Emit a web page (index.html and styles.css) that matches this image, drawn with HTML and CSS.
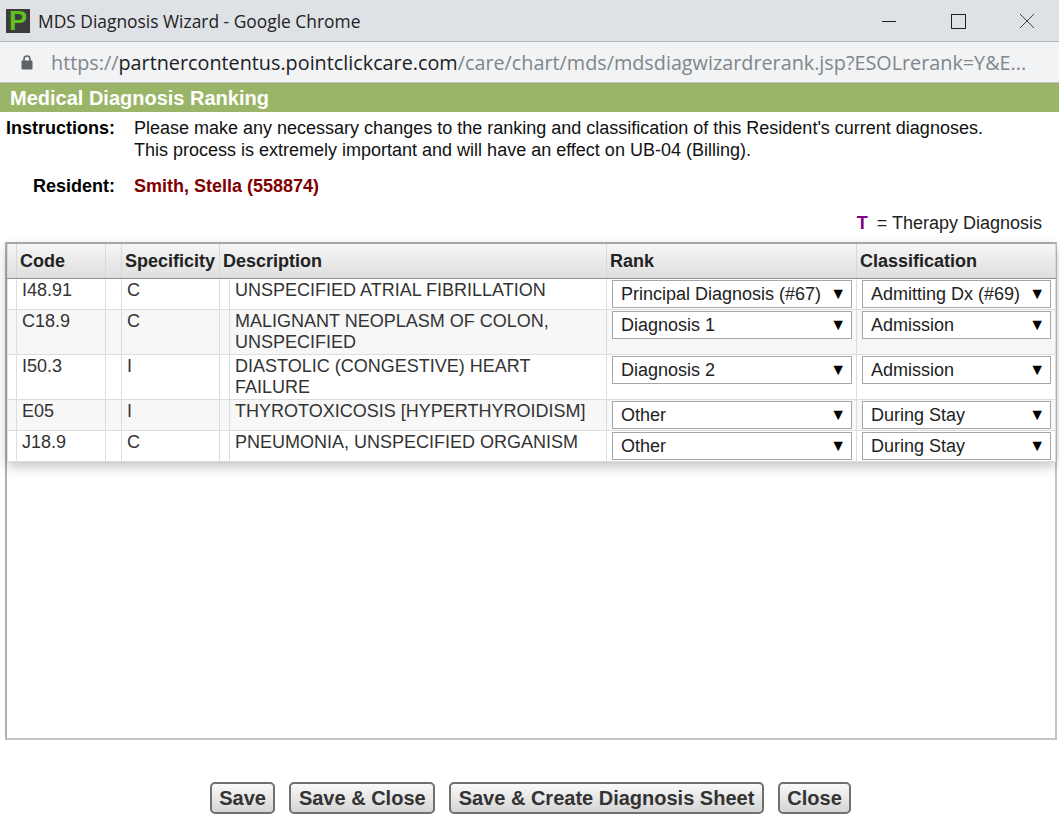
FILE: index.html
```html
<!DOCTYPE html>
<html lang="en">

<head>
  <meta charset="UTF-8">
  <title>MDS Diagnosis Wizard</title>
  <link rel="stylesheet" href="styles.css">
</head>

<body>
  <div class="titlebar">
    <span class="app-icon">P</span>
    <span class="window-title">MDS Diagnosis Wizard - Google Chrome</span>
    <div class="window-controls">
      <svg width="16" height="16" viewBox="0 0 16 16"><path d="M1 8.5h14" stroke="#222" fill="none" /></svg>
      <svg width="16" height="16" viewBox="0 0 16 16"><rect x="1.5" y="1.5" width="14" height="14" stroke="#222" fill="none" /></svg>
      <svg width="16" height="16" viewBox="0 0 16 16"><path d="M1 1l14 14M15 1L1 15" stroke="#444" fill="none" /></svg>
    </div>
  </div>

  <div class="addressbar">
    <svg class="lock" width="12" height="16" viewBox="0 0 12 16"><path d="M3 7V5a3 3 0 0 1 6 0v2" stroke="#5f6368" stroke-width="1.6" fill="none" /><rect x="0.5" y="6.5" width="11" height="9" rx="1" fill="#5f6368" /></svg>
    <span class="url"><span class="scheme">https://</span><span class="host">partnercontentus.pointclickcare.com</span>/care/chart/mds/mdsdiagwizardrerank.jsp?ESOLrerank=Y&amp;E...</span>
  </div>

  <h1 class="page-title">Medical Diagnosis Ranking</h1>

  <div class="info">
    <div class="info-label left">Instructions:</div>
    <div>Please make any necessary changes to the ranking and classification of this Resident's current diagnoses.<br>This process is extremely important and will have an effect on UB-04 (Billing).</div>
    <div class="info-label resident-label">Resident:</div>
    <div class="resident-name">Smith, Stella (558874)</div>
  </div>

  <div class="legend"><b>T</b> = Therapy Diagnosis</div>

  <div class="frame">
    <table class="diag-table">
      <colgroup>
        <col class="c-flag">
        <col class="c-code">
        <col class="c-gap">
        <col class="c-spec">
        <col class="c-gap2">
        <col class="c-desc">
        <col class="c-rank">
        <col class="c-class">
      </colgroup>
      <thead>
        <tr>
          <th></th>
          <th>Code</th>
          <th></th>
          <th>Specificity</th>
          <th colspan="2">Description</th>
          <th>Rank</th>
          <th>Classification</th>
        </tr>
      </thead>
      <tbody>
        <tr>
          <td></td>
          <td>I48.91</td>
          <td></td>
          <td>C</td>
          <td></td>
          <td>UNSPECIFIED ATRIAL FIBRILLATION</td>
          <td class="pick"><div class="select"><select><option>Principal Diagnosis (#67)</option></select></div></td>
          <td class="pick"><div class="select"><select><option>Admitting Dx (#69)</option></select></div></td>
        </tr>
        <tr>
          <td></td>
          <td>C18.9</td>
          <td></td>
          <td>C</td>
          <td></td>
          <td>MALIGNANT NEOPLASM OF COLON, UNSPECIFIED</td>
          <td class="pick"><div class="select"><select><option>Diagnosis 1</option></select></div></td>
          <td class="pick"><div class="select"><select><option>Admission</option></select></div></td>
        </tr>
        <tr>
          <td></td>
          <td>I50.3</td>
          <td></td>
          <td>I</td>
          <td></td>
          <td>DIASTOLIC (CONGESTIVE) HEART FAILURE</td>
          <td class="pick"><div class="select"><select><option>Diagnosis 2</option></select></div></td>
          <td class="pick"><div class="select"><select><option>Admission</option></select></div></td>
        </tr>
        <tr>
          <td></td>
          <td>E05</td>
          <td></td>
          <td>I</td>
          <td></td>
          <td>THYROTOXICOSIS [HYPERTHYROIDISM]</td>
          <td class="pick"><div class="select"><select><option>Other</option></select></div></td>
          <td class="pick"><div class="select"><select><option>During Stay</option></select></div></td>
        </tr>
        <tr>
          <td></td>
          <td>J18.9</td>
          <td></td>
          <td>C</td>
          <td></td>
          <td>PNEUMONIA, UNSPECIFIED ORGANISM</td>
          <td class="pick"><div class="select"><select><option>Other</option></select></div></td>
          <td class="pick"><div class="select"><select><option>During Stay</option></select></div></td>
        </tr>
      </tbody>
    </table>
  </div>

  <div class="actions">
    <button>Save</button>
    <button>Save &amp; Close</button>
    <button>Save &amp; Create Diagnosis Sheet</button>
    <button>Close</button>
  </div>
</body>

</html>
```

FILE: styles.css
```css
* {
  box-sizing: border-box;
}

html,
body {
  height: 828px;
  overflow: hidden;
}

body {
  font-family: "Liberation Sans", Arial, sans-serif;
  font-size: 18px;
  margin: 0;
  background: white;
  color: #111;
}

.titlebar {
  display: flex;
  align-items: center;
  height: 42px;
  padding-left: 6px;
  background: #dee1e6;
  border-bottom: 1px solid #b4b6ba;
}

.app-icon {
  width: 24px;
  height: 24px;
  margin-right: 8px;
  background: #3c3c3c;
  color: #5fc11f;
  font-size: 27px;
  font-weight: bold;
  line-height: 24px;
  text-align: center;
}

.window-title {
  font-family: "Open Sans", sans-serif;
  font-size: 17.4px;
  color: #222;
}

.window-controls {
  display: flex;
  gap: 53px;
  margin-left: auto;
  margin-right: 24px;
}

.addressbar {
  display: flex;
  align-items: center;
  height: 41px;
  padding-left: 21px;
  background: #f1f3f4;
  border-bottom: 1px solid #c4c5c7;
}

.lock {
  margin-right: 18px;
}

.url {
  font-family: "Open Sans", sans-serif;
  font-size: 19.8px;
  color: #80868b;
  white-space: nowrap;
}

.url .host {
  color: #202124;
}

.page-title {
  margin: 0;
  height: 29px;
  padding-left: 10px;
  background: #9ab567;
  color: white;
  font-size: 20px;
  line-height: 30px;
}

.info {
  display: grid;
  grid-template-columns: 110px 1fr;
  column-gap: 19px;
  padding: 5px 0 0 5px;
  line-height: 22px;
}

.info-label {
  font-weight: bold;
  text-align: right;
  color: #000;
}

.resident-label,
.resident-name {
  margin-top: 14px;
}

.resident-name {
  font-weight: bold;
  color: #800000;
}

.legend {
  margin-top: 15px;
  padding-right: 17px;
  text-align: right;
  line-height: 22px;
  color: #222;
}

.legend b {
  color: #800080;
  margin-right: 4px;
}

.frame {
  height: 498px;
  margin: 8px 2px 0 5px;
  border: 2px solid #b0b0b0;
  border-bottom-color: #c4c4c4;
  border-right-color: #c4c4c4;
}

.diag-table {
  width: 1048px;
  table-layout: fixed;
  border-collapse: collapse;
  color: #333;
  box-shadow: 0 4px 12px rgba(0, 0, 0, 0.25);
}

.c-flag {
  width: 9px;
}

.c-code {
  width: 89px;
}

.c-gap {
  width: 16px;
}

.c-spec {
  width: 98px;
}

.c-gap2 {
  width: 10px;
}

.c-desc {
  width: 377px;
}

.c-rank {
  width: 250px;
}

.c-class {
  width: 199px;
}

.diag-table th {
  height: 34px;
  padding: 2px 3px 0;
  text-align: left;
  font-size: 18px;
  color: #222;
  background: linear-gradient(#f6f6f6, #dedede);
  border: 1px solid #d8d8d8;
  border-top: 0;
  border-bottom: 1px solid #8f8f8f;
}

.diag-table td {
  padding: 1px 5px 1px;
  vertical-align: top;
  line-height: 21px;
  height: 31px;
  font-size: 18px;
  border: 1px solid #ddd;
  word-wrap: break-word;
}

.diag-table tbody tr:nth-child(even) {
  background: #f7f7f7;
}

.diag-table td.pick {
  padding: 1px 4px 0 5px;
  vertical-align: top;
}

.select {
  position: relative;
}

.select::after {
  content: "\25BC";
  position: absolute;
  top: 6px;
  right: 6px;
  font-size: 16px;
  line-height: 16px;
  color: #000;
  pointer-events: none;
}

.select select {
  appearance: none;
  display: block;
  width: 100%;
  height: 28px;
  padding: 0 0 0 8px;
  font-family: inherit;
  font-size: 18px;
  color: #222;
  background: white;
  border: 1px solid #a6a6a6;
  border-radius: 0;
}

.actions {
  display: flex;
  justify-content: center;
  gap: 14px;
  margin-top: 42px;
  padding-left: 2px;
}

.actions button {
  height: 32px;
  padding: 0 7.5px;
  font-family: inherit;
  font-size: 20px;
  font-weight: bold;
  color: #333;
  background: linear-gradient(#fafafa, #d4d4d4);
  border: 2px solid #707070;
  border-radius: 5px;
}
```
